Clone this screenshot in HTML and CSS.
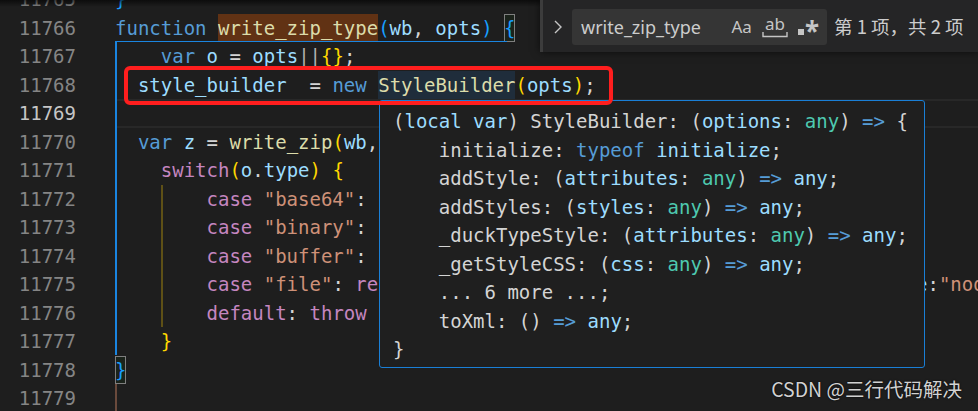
FILE: index.html
```html
<!DOCTYPE html>
<html>
<head>
<meta charset="utf-8">
<link rel="stylesheet" href="styles.css">
</head>
<body>
<div class="editor">
  <div class="gutter">
    <div class="ln">11765</div>
    <div class="ln">11766</div>
    <div class="ln">11767</div>
    <div class="ln">11768</div>
    <div class="ln cur">11769</div>
    <div class="ln">11770</div>
    <div class="ln">11771</div>
    <div class="ln">11772</div>
    <div class="ln">11773</div>
    <div class="ln">11774</div>
    <div class="ln">11775</div>
    <div class="ln">11776</div>
    <div class="ln">11777</div>
    <div class="ln">11778</div>
    <div class="ln">11779</div>
  </div>
  <div class="code">
    <div class="guide g-blue-h"></div>
    <div class="guide g-blue-v"></div>
    <div class="guide g-brown"></div>
    <div class="guide g-gold"></div>
    <div class="line"><span class="b3">}</span></div>
    <div class="line"><span class="kw">function</span> <span class="fn find">write_zip_type</span><span class="b3">(</span><span class="v">wb</span><span class="p">, </span><span class="v">opts</span><span class="b3">)</span> <span class="b3 box">{</span></div>
    <div class="line">    <span class="kw">var</span> <span class="v">o</span> <span class="p">=</span> <span class="v">opts</span><span class="op">||</span><span class="b1">{}</span><span class="p">;</span></div>
    <div class="line">  <span class="v">style_builder</span>  <span class="p">=</span> <span class="kw">new</span> <span class="fn hl">StyleBuilder</span><span class="b1">(</span><span class="v">opts</span><span class="b1">)</span><span class="p">;</span></div>
    <div class="line curline"></div>
    <div class="line">  <span class="kw">var</span> <span class="v">z</span> <span class="p">=</span> <span class="fn">write_zip</span><span class="b1">(</span><span class="v">wb</span><span class="p">, </span><span class="v">opts</span><span class="b1">)</span><span class="p">;</span></div>
    <div class="line">    <span class="ctl">switch</span><span class="b1">(</span><span class="v">o</span><span class="p">.</span><span class="v">type</span><span class="b1">)</span> <span class="b1">{</span></div>
    <div class="line">        <span class="ctl">case</span> <span class="str">"base64"</span><span class="p">:</span> <span class="ctl">return</span> <span class="v">z</span><span class="p">.</span><span class="fn">generate</span><span class="b2">(</span><span class="b3">{</span><span class="v">type</span><span class="p">:</span><span class="str">"base64"</span><span class="b3">}</span><span class="b2">)</span><span class="p">;</span></div>
    <div class="line">        <span class="ctl">case</span> <span class="str">"binary"</span><span class="p">:</span> <span class="ctl">return</span> <span class="v">z</span><span class="p">.</span><span class="fn">generate</span><span class="b2">(</span><span class="b3">{</span><span class="v">type</span><span class="p">:</span><span class="str">"string"</span><span class="b3">}</span><span class="b2">)</span><span class="p">;</span></div>
    <div class="line">        <span class="ctl">case</span> <span class="str">"buffer"</span><span class="p">:</span> <span class="ctl">return</span> <span class="v">z</span><span class="p">.</span><span class="fn">generate</span><span class="b2">(</span><span class="b3">{</span><span class="v">type</span><span class="p">:</span><span class="str">"nodebuffer"</span><span class="b3">}</span><span class="b2">)</span><span class="p">;</span></div>
    <div class="line">        <span class="ctl">case</span> <span class="str">"file"</span><span class="p">:</span> <span class="ctl">return</span> <span class="v">_fs</span><span class="p">.</span><span class="fn">writeFileSync</span><span class="b2">(</span><span class="v">o</span><span class="p">.</span><span class="v">file</span><span class="p">, </span><span class="v">z</span><span class="p">.</span><span class="fn">generate</span><span class="b3">({</span> <span class="v">type</span><span class="p">:</span><span class="str">"nodebuffer"</span><span class="b3">})</span><span class="b2">)</span><span class="p">;</span></div>
    <div class="line">        <span class="ctl">default</span><span class="p">:</span> <span class="ctl">throw</span> <span class="kw">new</span> <span class="typ">Error</span><span class="b2">(</span><span class="str">"Unrecognized type "</span> <span class="p">+</span> <span class="v">o</span><span class="p">.</span><span class="v">type</span><span class="b2">)</span><span class="p">;</span></div>
    <div class="line">    <span class="b1">}</span></div>
    <div class="line"><span class="b3 box">}</span></div>
    <div class="line"></div>
  </div>

  <div class="findwidget">
    <svg class="chev" width="10" height="16" viewBox="0 0 10 16"><path d="M2 2 L8 8 L2 14" fill="none" stroke="#c5c5c5" stroke-width="1.4"/></svg>
    <div class="findinput">
      <span class="findtext">write_zip_type</span>
      <span class="opt">Aa</span>
      <span class="opt ab">ab<svg class="abline" width="26" height="6" viewBox="0 0 26 6"><path d="M1 0 V4.5 H25 V0" fill="none" stroke="#c5c5c5" stroke-width="1.4"/></svg></span>
      <span class="opt rx"><span class="sq"></span><span class="star">*</span></span>
    </div>
    <span class="count">第 1 项，共 2 项</span>
  </div>

  <div class="redbox"></div>

  <div class="hover">
    <div class="hl1"><span class="p">(</span><span class="v">local var</span><span class="p">) StyleBuilder: (</span><span class="v">options</span><span class="p">: </span><span class="typ">any</span><span class="p">)</span> <span class="kw">=&gt;</span> <span class="p">{</span></div>
    <div class="hl1">    <span class="p">initialize: </span><span class="kw">typeof</span> <span class="v">initialize</span><span class="p">;</span></div>
    <div class="hl1">    <span class="p">addStyle: (</span><span class="v">attributes</span><span class="p">: </span><span class="typ">any</span><span class="p">)</span> <span class="kw">=&gt;</span> <span class="v">any</span><span class="p">;</span></div>
    <div class="hl1">    <span class="p">addStyles: (</span><span class="v">styles</span><span class="p">: </span><span class="typ">any</span><span class="p">)</span> <span class="kw">=&gt;</span> <span class="v">any</span><span class="p">;</span></div>
    <div class="hl1">    <span class="p">_duckTypeStyle: (</span><span class="v">attributes</span><span class="p">: </span><span class="typ">any</span><span class="p">)</span> <span class="kw">=&gt;</span> <span class="v">any</span><span class="p">;</span></div>
    <div class="hl1">    <span class="p">_getStyleCSS: (</span><span class="v">css</span><span class="p">: </span><span class="typ">any</span><span class="p">)</span> <span class="kw">=&gt;</span> <span class="v">any</span><span class="p">;</span></div>
    <div class="hl1">    <span class="p">... 6 more ...;</span></div>
    <div class="hl1">    <span class="p">toXml: ()</span> <span class="kw">=&gt;</span> <span class="v">any</span><span class="p">;</span></div>
    <div class="hl1"><span class="p">}</span></div>
  </div>

  <div class="watermark">CSDN @三行代码解决</div>
  <div class="topshadow"></div>
</div>
</body>
</html>
```
FILE: styles.css
```css
html, body {
  margin: 0;
  padding: 0;
  background: #1e1e1e;
  width: 978px;
  height: 411px;
  overflow: hidden;
}

.editor {
  position: relative;
  width: 978px;
  height: 411px;
  overflow: hidden;
  display: flex;
  font-family: "DejaVu Sans Mono", "Liberation Mono", monospace;
  font-size: 19px;
  color: #d4d4d4;
}

.gutter {
  width: 76px;
  padding-right: 39px;
  margin-top: -14.75px;
  flex: none;
}

.ln {
  height: 28.5px;
  line-height: 28.5px;
  text-align: right;
  color: #858585;
}
.ln.cur { color: #c6c6c6; }

.code {
  position: relative;
  flex: 1;
  margin-top: -14.75px;
  min-width: 0;
}

.line {
  height: 28.5px;
  line-height: 28.5px;
  white-space: pre;
  box-sizing: border-box;
}

.curline {
  border-top: 2px solid #282828;
  border-bottom: 2px solid #282828;
}

.guide { position: absolute; }
.g-blue-h { left: 0; top: 56px; width: 392px; height: 1px; background: #1a85e0; }
.g-blue-v { left: 0; top: 57px; width: 1.5px; height: 313px; background: #1a85e0; }
.g-brown { left: 0; top: 399px; width: 1.5px; height: 40px; background: #6a4a3c; }
.g-gold { left: 46px; top: 199.5px; width: 1.5px; height: 142.5px; background: #5e5016; }

.kw { color: #569cd6; }
.ctl { color: #c586c0; }
.v { color: #9cdcfe; }
.fn { color: #dcdcaa; }
.str { color: #ce9178; }
.typ { color: #4ec9b0; }
.p { color: #d4d4d4; }
.op { color: #b0b0b0; }
.b1 { color: #ffd700; }
.b2 { color: #da70d6; }
.b3 { color: #179fff; }

.find {
  display: inline-block;
  background: #613214;
  height: 28.5px;
}
.hl {
  display: inline-block;
  background: #1f2d3b;
  height: 28.5px;
}
.box {
  display: inline-block;
  height: 28px;
  box-shadow: inset 0 0 0 1px #7f7f7f;
  background: rgba(0, 100, 0, 0.08);
}

/* find widget */
.findwidget {
  position: absolute;
  left: 540px;
  top: 0;
  width: 438px;
  height: 52px;
  box-sizing: border-box;
  background: #252526;
  border-left: 3px solid #3c3c3c;
  box-shadow: 0 0 8px rgba(0, 0, 0, 0.6);
  display: flex;
  align-items: center;
  padding-left: 10px;
  font-family: "Noto Sans", "Open Sans", sans-serif;
  color: #cccccc;
}
.chev { flex: none; margin-right: 9px; margin-top: 1px; }
.findinput {
  width: 255px;
  height: 36px;
  box-sizing: border-box;
  background: #353535;
  border-radius: 3px;
  display: flex;
  align-items: center;
  padding-left: 9px;
  margin-top: 1px;
  flex: none;
}
.findtext {
  font-size: 18px;
  color: #cccccc;
  flex: 1;
}
.opt {
  font-size: 17px;
  color: #c5c5c5;
  margin-right: 10px;
  position: relative;
}
.ab {
  display: inline-flex;
  flex-direction: column;
  align-items: center;
  line-height: 16px;
}
.abline { display: block; margin-top: 0; }
.rx {
  display: inline-flex;
  align-items: flex-end;
  margin-right: 8px;
  height: 20px;
}
.sq {
  width: 6px;
  height: 6px;
  background: #c5c5c5;
  margin-right: 1px;
  margin-bottom: 2px;
}
.star {
  font-size: 26px;
  line-height: 24px;
  height: 18px;
  font-weight: 700;
}
.count {
  font-family: "Noto Sans CJK SC", sans-serif;
  font-size: 18.5px;
  margin-left: 7px;
  color: #cccccc;
  white-space: nowrap;
}

/* red annotation */
.redbox {
  position: absolute;
  left: 124px;
  top: 66px;
  width: 481px;
  height: 31px;
  border: 4px solid #ff1e1e;
  border-radius: 6px;
  z-index: 3;
}

/* hover */
.hover {
  position: absolute;
  left: 379px;
  top: 100px;
  width: 546px;
  height: 268px;
  box-sizing: border-box;
  background: #1f1f1f;
  border: 1px solid #1a7fd6;
  border-radius: 3px;
  padding: 6px 11px 4px 13px;
  z-index: 2;
}
.hl1 {
  height: 28.5px;
  line-height: 28.5px;
  white-space: pre;
}

.watermark {
  position: absolute;
  right: 16px;
  bottom: 8px;
  font-family: "Noto Sans CJK SC", sans-serif;
  font-size: 19.5px;
  color: #d2d2d2;
  text-shadow: 0 0 2px #000;
  z-index: 4;
}

.topshadow {
  position: absolute;
  left: 0;
  top: 0;
  width: 540px;
  height: 7px;
  background: linear-gradient(#000, rgba(0, 0, 0, 0));
  opacity: 0.6;
  z-index: 1;
}
```
